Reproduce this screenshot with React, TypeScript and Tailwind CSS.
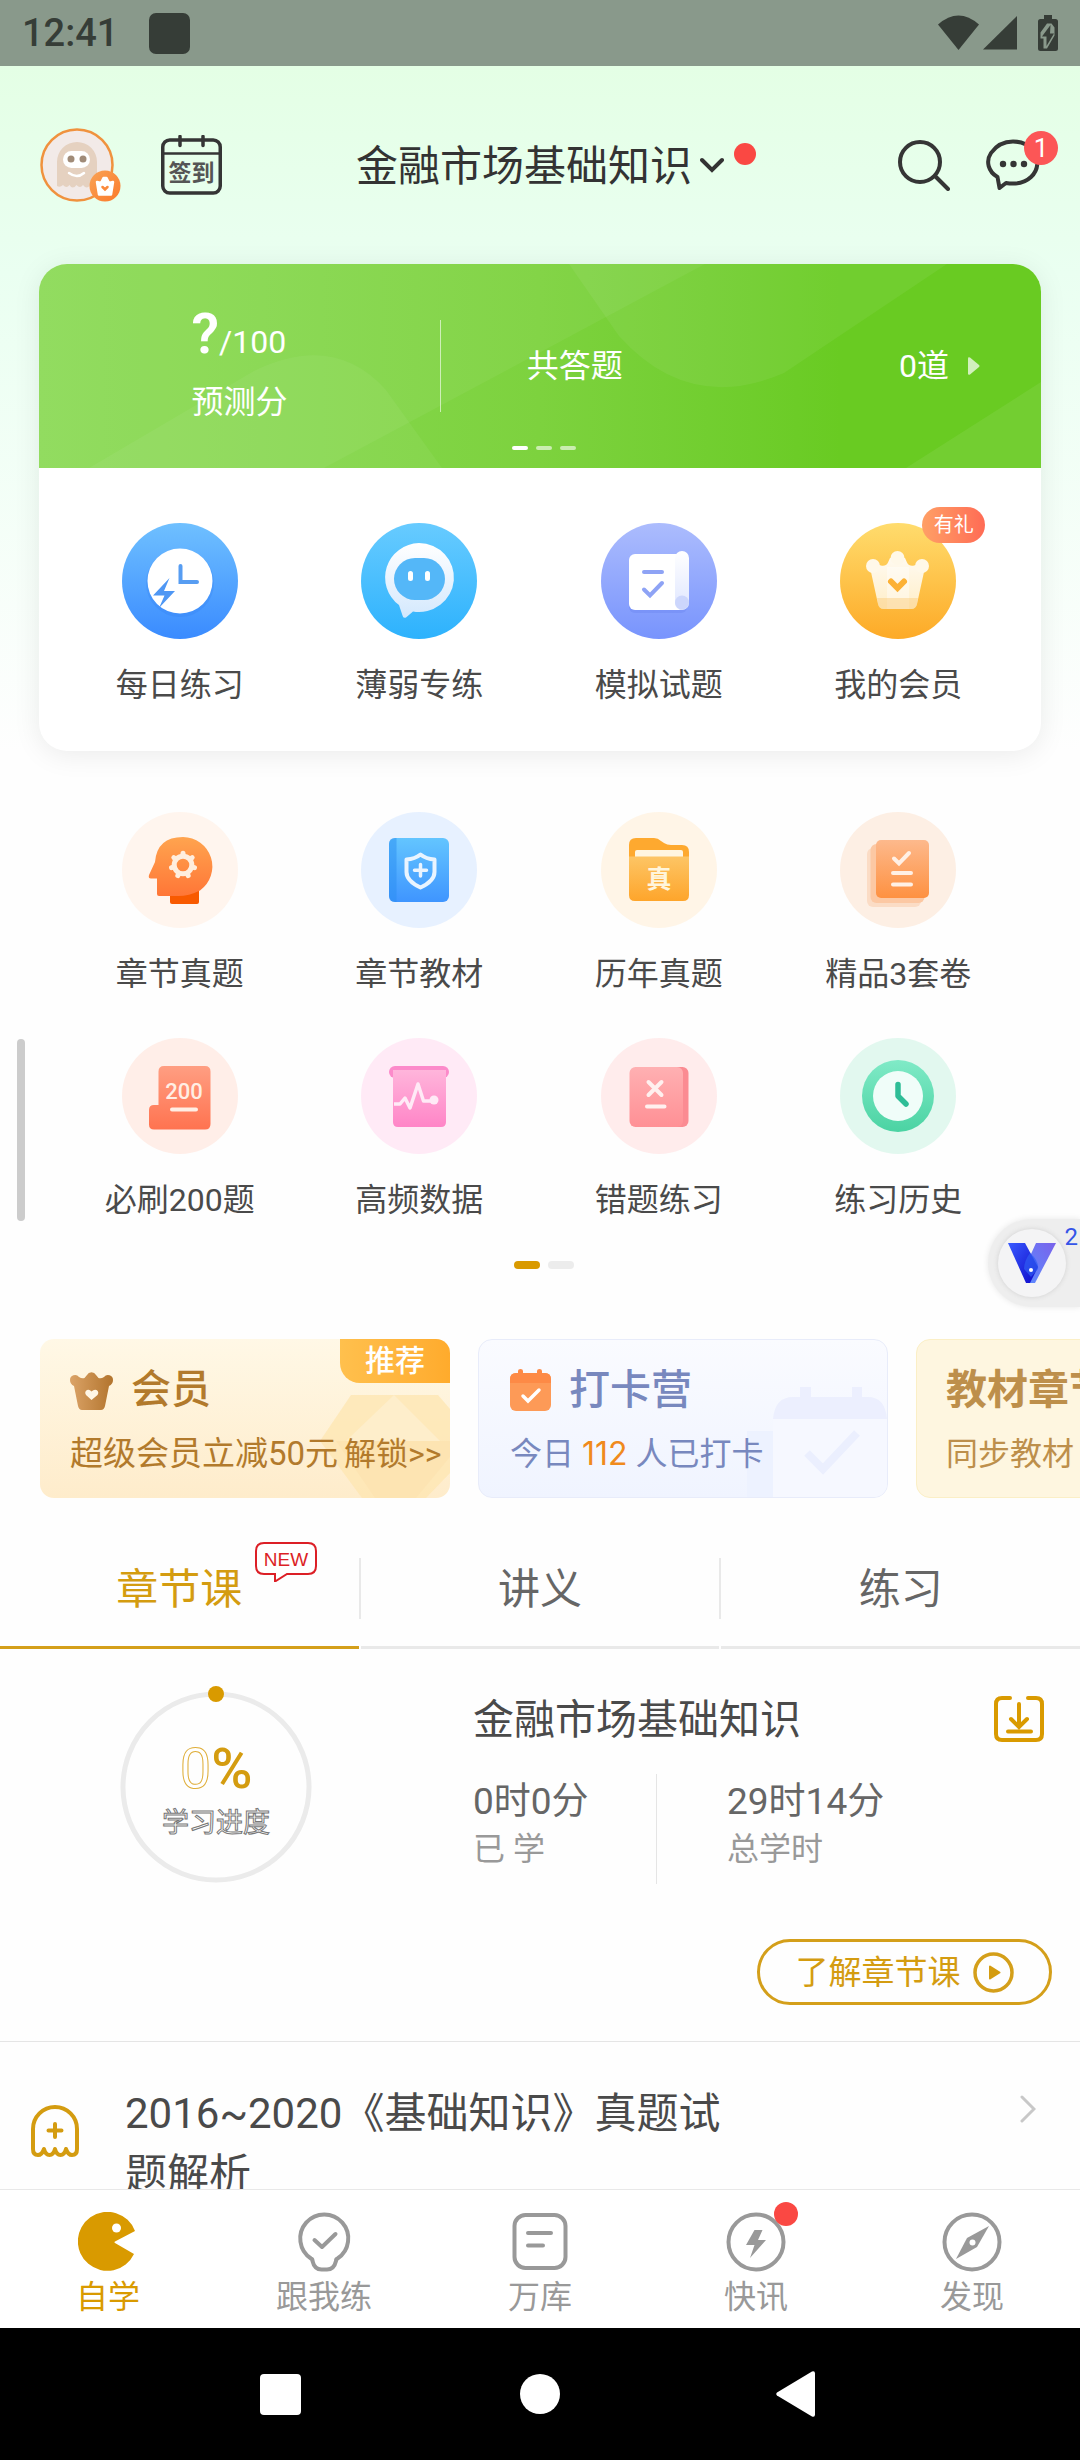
import React, { useState } from "react";

type EntryProps = {
  label: string;
  icon: React.ReactNode;
  badge?: string;
};

/* ---------- Status bar and header icons ---------- */

const StatusBar: React.FC = () => (
  <div className="flex h-[66px] shrink-0 items-center justify-between bg-[#89998b] px-[22px] text-[#363d37]">
    <div className="flex items-center gap-[31px]">
      <span className="text-[38px] font-medium leading-[48px]">12:41</span>
      <span className="h-[41px] w-[41px] rounded-[7px] bg-[#363d37]" />
    </div>
    <svg className="h-9 w-[120px]" viewBox="0 0 120 36" fill="currentColor">
      <path d="M0 9.5Q20.500 -8.500 41 9.500L20.500 35Z" />
      <path d="M79 1V34.500H45Z" />
      <path d="M106 0h8v4h3.500q2.500 0 2.500 2.500v27q0 2.500-2.500 2.500h-15q-2.500 0-2.500-2.500v-27q0-2.500 2.500-2.500H106Z" />
      <path
        d="M109 8.500h4.500l3 4v8l-7.500 13h-3.500v-10h-3v-6Z"
        fill="#89998b"
      />
      <path d="M112.500 10L104 21.500h4.500V31L116 18.500h-4Z" />
    </svg>
  </div>
);

const AvatarIcon = () => (
  <svg className="h-[75px] w-[82px]" viewBox="0 0 82 75">
    <defs>
      <linearGradient id="vip" x1="0" y1="0" x2="1" y2="1">
        <stop offset="0" stopColor="#f9a355" />
        <stop offset="1" stopColor="#fb7a2b" />
      </linearGradient>
    </defs>
    <circle cx="37" cy="37" r="35.500" fill="#f2eae8" stroke="#f0923e" strokeWidth="2.500" />
    <path
      d="M17 34a20 20 0 0 1 40 0V56q-3 5-7 1-3 5-7 0-3 4-6.500 0-4 5-7 0-3 4-6.500 0-3 3-6 1Z"
      fill="#e5d1c0"
    />
    <rect x="23" y="23" width="27" height="17" rx="8.500" fill="#fff" />
    <circle cx="31" cy="31" r="3.500" fill="#a08b78" />
    <circle cx="43" cy="31" r="3.500" fill="#a08b78" />
    <path d="M29 45q8 6 15 0" fill="none" stroke="#fff" strokeWidth="2.500" strokeLinecap="round" />
    <circle cx="65" cy="58" r="15.500" fill="url(#vip)" />
    <path
      d="M57 54l4 1 2.500-5h3l2.500 5 4-1-2 12.500h-12Z"
      fill="#fff"
      stroke="#fff"
      strokeWidth="2.500"
      strokeLinejoin="round"
    />
    <path d="M62.500 59l2.500 2.500 2.500-2.500" fill="none" stroke="#fb8a3b" strokeWidth="2.500" strokeLinecap="round" />
  </svg>
);

const SignInIcon = () => (
  <svg className="h-[60px] w-[61px]" viewBox="0 0 61 60" fill="none" stroke="#353535" strokeWidth="3.500">
    <rect x="1.750" y="5" width="57.500" height="53" rx="7" />
    <path d="M2 18.500h57" strokeWidth="2.500" />
    <path d="M19 1.500v9M42 1.500v9" strokeLinecap="round" />
    <text
      x="30.500"
      y="46"
      fontSize="23"
      fontWeight="700"
      textAnchor="middle"
      fill="#555"
      stroke="none"
    >
      签到
    </text>
  </svg>
);

const SearchIcon = () => (
  <svg className="h-[52px] w-[52px]" viewBox="0 0 52 52" fill="none" stroke="#353535" strokeWidth="4" strokeLinecap="round">
    <circle cx="22" cy="23" r="20" />
    <path d="M37.500 37.500L50 50" />
  </svg>
);

const MessageIcon = () => (
  <svg className="h-[52px] w-[54px]" viewBox="0 0 54 52" fill="none" stroke="#353535" strokeWidth="4">
    <path
      d="M11.500 38A21 18 0 0 1 5 14Q13 2.500 27 2.500q13 0 20.500 9A20 20 0 0 1 45 38Q36 46.500 20 44l-6.500 5Z"
      strokeLinejoin="round"
    />
    <g fill="#353535" stroke="none">
      <circle cx="17" cy="25" r="3.200" />
      <circle cx="27.500" cy="25" r="3.200" />
      <circle cx="38" cy="25" r="3.200" />
    </g>
  </svg>
);

/* ---------- Round entry icons, all drawn on a 116 x 116 board ---------- */

const Board: React.FC<{
  id: string;
  disc: string;
  discEnd?: string;
  from?: string;
  to?: string;
  children: React.ReactNode;
}> = ({ id, disc, discEnd, from, to, children }) => (
  <svg className="h-[116px] w-[116px]" viewBox="0 0 116 116" fill="none">
    <defs>
      <linearGradient id={`${id}-disc`} x1="0" y1="0" x2="0" y2="1">
        <stop offset="0" stopColor={disc} />
        <stop offset="1" stopColor={discEnd || disc} />
      </linearGradient>
      <linearGradient id={id} x1="0" y1="0" x2="0" y2="1">
        <stop offset="0" stopColor={from || "#fff"} />
        <stop offset="1" stopColor={to || "#fff"} />
      </linearGradient>
    </defs>
    <circle cx="58" cy="58" r="58" fill={`url(#${id}-disc)`} />
    {children}
  </svg>
);

const DailyIcon = () => (
  <Board id="daily" disc="#6fc0ff" discEnd="#3a8bff">
    <circle cx="58" cy="60" r="34" fill="#2f7df0" opacity="0.25" />
    <circle cx="58" cy="58" r="32.500" fill="#fff" />
    <path d="M58.500 43v16H75" stroke="#579df2" strokeWidth="4" strokeLinecap="round" />
    <path d="M47.500 55L31 72.500h11.500L37 85l16-17H42Z" fill="#4f97f4" />
  </Board>
);

const RobotIcon = () => (
  <Board id="robot" disc="#67cbff" discEnd="#2db2fd" from="#ffffff" to="#d3e8fd">
    <path
      d="M58 20a35 34.500 0 1 1-6 68.500l-7 6q-3 1-3.500-2L38 82A35 34.500 0 0 1 58 20Z"
      fill="url(#robot)"
    />
    <rect x="33" y="35" width="51" height="42" rx="21" fill="#54b7f8" />
    <path d="M49.500 50.500v5M66.500 50.500v5" stroke="#fff" strokeWidth="5" strokeLinecap="round" />
  </Board>
);

const MockIcon = () => (
  <Board id="mock" disc="#acbcfd" discEnd="#7894fd" from="#ffffff" to="#dfe6ff">
    <rect x="28" y="34" width="58" height="56" rx="6" fill="#5d79ea" opacity="0.25" />
    <rect x="28" y="31" width="56" height="56" rx="6" fill="#fff" />
    <rect x="74" y="28" width="14" height="59" rx="7" fill="url(#mock)" />
    <circle cx="81" cy="79.500" r="7" fill="#ccd6fc" />
    <path d="M43 49h18M43 66.500l6 6L61 60" stroke="#8ea3f5" strokeWidth="4" strokeLinecap="round" />
  </Board>
);

const MemberIcon = () => (
  <Board id="member" disc="#ffdc6d" discEnd="#fdaa27" from="#fffaf0" to="#ffeec8">
    <path
      d="M31 49l7 32q1 5 6 5h27q5 0 6-5l7-32-2-9-8 2.500q-5 1-7-3l-2-4.500H50l-2 4.500q-2 4-7 3L33 40Z"
      fill="url(#member)"
    />
    <g fill="#fff8e8">
      <circle cx="33" cy="43" r="7" />
      <circle cx="57.500" cy="35" r="7" />
      <circle cx="82" cy="43" r="7" />
    </g>
    <path d="M47 44h22v42H47Z" fill="#fff" opacity="0.4" />
    <path d="M37 75h41l-1 6q-1 5-6 5H44q-5 0-6-5Z" fill="#fbc977" opacity="0.45" />
    <path d="M51 58.500l6.500 6.500 6.500-6.500" stroke="#fcb136" strokeWidth="6" strokeLinecap="round" />
  </Board>
);

const HeadIcon = () => (
  <Board id="head" disc="#fff5ee" from="#ffa44f" to="#ff7637">
    <rect x="48" y="76" width="29" height="16" rx="2" fill="#f85a00" />
    <path
      d="M61 25a29.500 29.500 0 0 1 17 53.500Q67 84 56 84H37q-2 0-2-2V66.500h-6q-3 0-2-3.500l6-13Q35 25 61 25Z"
      fill="url(#head)"
    />
    <circle cx="61" cy="53" r="8.800" stroke="#ffeede" strokeWidth="5" />
    {[0, 51, 103, 154, 206, 257, 309].map((deg) => (
      <path
        key={deg}
        d="M61 43v-1.800"
        stroke="#ffeede"
        strokeWidth="5"
        strokeLinecap="round"
        transform={`rotate(${deg} 61 53)`}
      />
    ))}
  </Board>
);

const BookIcon = () => (
  <Board id="book" disc="#e7f1ff" from="#63c5ff" to="#3f95ff">
    <rect x="28" y="26" width="60" height="64" rx="6" fill="url(#book)" />
    <path d="M34 26h1.500v64H34q-6 0-6-6V32q0-6 6-6Z" fill="#2a8df2" opacity="0.5" />
    <path
      d="M59.500 42.500Q65 47 73.500 47.500V60q0 9-14 15.500-14-6.500-14-15.500V47.500Q54 47 59.500 42.500Z"
      stroke="#e9f4ff"
      strokeWidth="4"
      strokeLinejoin="round"
    />
    <path d="M59.500 52.500v11.500M53.500 58.300h12" stroke="#e9f4ff" strokeWidth="3.500" strokeLinecap="round" />
  </Board>
);

const FolderIcon = () => (
  <Board id="folder" disc="#fff5e7" from="#fdc565" to="#fea52b">
    <path d="M28 50V33q0-7 7-7h18q4 0 7 3l3 2q3 2 7 2h11q7 0 7 7v10Z" fill="#fea92f" />
    <rect x="34" y="38" width="48" height="12" rx="2" fill="#fff5e0" />
    <path d="M28 44.500h60V83q0 6-6 6H34q-6 0-6-6Z" fill="url(#folder)" />
    <text x="58" y="76" fontSize="25" fontWeight="700" textAnchor="middle" fill="#fff5dc">
      真
    </text>
  </Board>
);

const PapersIcon = () => (
  <Board id="papers" disc="#fdefe4" from="#fdb98c" to="#fe9141">
    <rect x="27" y="36" width="54" height="59" rx="6" fill="#fbdcc5" />
    <rect x="30.500" y="32" width="54" height="59" rx="6" fill="#fcc8a3" />
    <rect x="36" y="28" width="53" height="58" rx="5" fill="url(#papers)" />
    <path d="M54 46.500l5 5L69 41M53 61h18M53 72.500h18" stroke="#fff0e5" strokeWidth="4" strokeLinecap="round" />
  </Board>
);

const TwoHundredIcon = () => (
  <Board id="two" disc="#ffeee8" from="#ff9e82" to="#ff7350">
    <path
      d="M42 28h41q5.500 0 5.500 5.500V86q0 5.500-5.500 5.500H32q-5 0-5-5V72q0-5 5-5h4.500V33.500Q36.500 28 42 28Z"
      fill="url(#two)"
    />
    <text x="62" y="60.500" fontSize="22" fontWeight="500" textAnchor="middle" fill="#ffeee4">
      200
    </text>
    <path d="M50 71.500h24" stroke="#ffeee4" strokeWidth="4" strokeLinecap="round" />
  </Board>
);

const PulseIcon = () => (
  <Board id="pulse" disc="#ffeaf6" from="#ffb5db" to="#ff85c7">
    <rect x="28" y="28" width="60" height="12" rx="6" fill="#fc8aca" />
    <path d="M32 32h53v52q0 5-5 5H37q-5 0-5-5Z" fill="url(#pulse)" />
    <path d="M33 66h6l5-6 5 10 8-24 5.500 17H72" stroke="#ffeaf6" strokeWidth="3.500" strokeLinejoin="round" />
    <circle cx="73" cy="62" r="4.500" fill="#ffeaf6" />
  </Board>
);

const MistakeIcon = () => (
  <Board id="mistake" disc="#ffecec" from="#ffb0b2" to="#ff9095">
    <rect x="50" y="29" width="37.500" height="60" rx="6" fill="#fb8b92" />
    <rect x="28.500" y="29" width="53.500" height="60" rx="6" fill="url(#mistake)" />
    <path d="M47.500 44l13 13M60.500 44l-13 13M46 68.500h17.500" stroke="#fff0ef" strokeWidth="4" strokeLinecap="round" />
  </Board>
);

const HistoryIcon = () => (
  <Board id="history" disc="#e2f8ef" from="#80eac7" to="#4bd3a3">
    <circle cx="58" cy="58" r="36" fill="url(#history)" />
    <circle cx="58" cy="58" r="25" fill="#f0fdf9" />
    <path d="M58 46.500V58l8 8" stroke="#2fbd97" strokeWidth="5.500" strokeLinecap="round" strokeLinejoin="round" />
  </Board>
);

const topEntries: EntryProps[] = [
  { label: "每日练习", icon: <DailyIcon /> },
  { label: "薄弱专练", icon: <RobotIcon /> },
  { label: "模拟试题", icon: <MockIcon /> },
  { label: "我的会员", icon: <MemberIcon />, badge: "有礼" },
];

const moreEntries: EntryProps[] = [
  { label: "章节真题", icon: <HeadIcon /> },
  { label: "章节教材", icon: <BookIcon /> },
  { label: "历年真题", icon: <FolderIcon /> },
  { label: "精品3套卷", icon: <PapersIcon /> },
  { label: "必刷200题", icon: <TwoHundredIcon /> },
  { label: "高频数据", icon: <PulseIcon /> },
  { label: "错题练习", icon: <MistakeIcon /> },
  { label: "练习历史", icon: <HistoryIcon /> },
];

const Entry: React.FC<EntryProps> = ({ label, icon, badge }) => (
  <button className="flex flex-col items-center">
    <span className="relative">
      {icon}
      {badge && (
        <span className="absolute -top-4 left-[82px] flex h-9 w-[63px] items-center justify-center rounded-full bg-gradient-to-r from-[#ff9f66] to-[#ff6b55] text-[20px] leading-none text-white">
          {badge}
        </span>
      )}
    </span>
    <span className="mt-6 whitespace-nowrap text-[32px] leading-[44px] text-[#4a4a4a]">
      {label}
    </span>
  </button>
);

/* ---------- Sections ---------- */

const Header: React.FC = () => (
  <header className="grid h-[198px] grid-cols-[1fr_auto_1fr] items-center px-10">
    <div className="flex items-center gap-[39px]">
      <button aria-label="个人中心">
        <AvatarIcon />
      </button>
      <button aria-label="签到">
        <SignInIcon />
      </button>
    </div>
    <button className="relative flex items-center gap-2 text-[#333]">
      <span className="pt-[3px] text-[42px] leading-[60px]">金融市场基础知识</span>
      <svg className="h-4 w-6" viewBox="0 0 24 16" fill="none" stroke="currentColor" strokeWidth="4" strokeLinecap="round">
        <path d="M2 3l10 10L22 3" />
      </svg>
      <span className="absolute -right-8 top-[9px] h-[22px] w-[22px] rounded-full bg-[#fa4843]" />
    </button>
    <div className="flex items-center justify-end gap-9">
      <button aria-label="搜索">
        <SearchIcon />
      </button>
      <button className="relative" aria-label="消息">
        <MessageIcon />
        <span className="absolute -right-[18px] -top-2 flex h-[34px] w-[34px] items-center justify-center rounded-full bg-[#fc5656] text-[26px] leading-none text-white">
          1
        </span>
      </button>
    </div>
  </header>
);

const ScoreBanner: React.FC = () => (
  <div className="relative h-[204px] bg-gradient-to-r from-[#8ddb58] via-[#7dd23e] via-50% to-[#69cb22] to-80% text-white">
    <svg className="absolute inset-0 h-full w-full" viewBox="0 0 1002 204" preserveAspectRatio="none" fill="#fff">
      <path d="M0 0H666L285 204H0Z" opacity="0.05" />
      <path d="M50 204L215 107Q295 68 347 126L403 204Z" opacity="0.05" />
      <path d="M530 0L580 72Q650 150 745 109L908 0Z" opacity="0.06" />
      <path d="M867 204L1002 118V204Z" opacity="0.07" />
    </svg>
    <div className="relative flex h-full items-center">
      <div className="w-[40%]">
        <div className="mx-auto w-24 whitespace-nowrap">
          <div className="flex items-baseline text-[32px] leading-[64px]">
            <b className="text-[56px] font-semibold">?</b>
            <span>/100</span>
          </div>
          <div className="text-[32px] leading-[56px]">预测分</div>
        </div>
      </div>
      <div className="h-[92px] w-px bg-white/60" />
      <div className="flex flex-1 items-center pl-[86px] pr-[61px] text-[32px] leading-[44px]">
        <span>共答题</span>
        <span className="ml-auto">0道</span>
        <svg className="ml-[19px] h-[18px] w-3 text-white/70" viewBox="0 0 12 18" fill="currentColor">
          <path d="M0 1.500Q0-.5 2 .5L11 8q1 1 0 2l-9 7.500q-2 1-2-1Z" />
        </svg>
      </div>
    </div>
    <div className="absolute inset-x-0 bottom-[18px] flex justify-center gap-2 pl-2">
      <i className="h-1 w-4 rounded-full bg-white" />
      <i className="h-1 w-4 rounded-full bg-white/60" />
      <i className="h-1 w-4 rounded-full bg-white/60" />
    </div>
  </div>
);

const PromoCards: React.FC = () => (
  <div className="mt-[70px] flex gap-7 overflow-hidden pl-10">
    <a
      href="#member"
      className="relative h-[159px] w-[410px] shrink-0 overflow-hidden rounded-[14px] bg-gradient-to-b from-[#fff8e6] to-[#feeccb] px-[30px] pt-[23px] text-[#b27a2c]"
    >
      <svg className="absolute bottom-0 right-0 h-[103px] w-[130px]" viewBox="0 0 130 103">
        <path d="M0 46L31 0H118L130 14V78L106 103H42Z" fill="#fde6b0" opacity="0.75" />
        <path d="M26 46L74 0l46 46Z" fill="#feeecb" />
        <path d="M16 46H130V62L96 103H55Z" fill="#fde4b2" />
      </svg>
      <span className="absolute right-0 top-0 flex h-11 w-[110px] items-center justify-center rounded-bl-[20px] bg-gradient-to-r from-[#ffc04d] to-[#ffab2c] text-[30px] font-medium leading-none text-white">
        推荐
      </span>
      <div className="relative flex items-center gap-[18px]">
        <svg className="h-10 w-[43px]" viewBox="0 0 43 40">
          <defs>
            <linearGradient id="promo-crown" x1="0" y1="0" x2="1" y2="0">
              <stop offset="0" stopColor="#dba367" />
              <stop offset="1" stopColor="#b2742d" />
            </linearGradient>
          </defs>
          <g fill="url(#promo-crown)">
            <path d="M0 10a5 5 0 0 1 9-3q3 2 5.500 1L17 5a5 5 0 0 1 9 0l2.500 3q2.500 1 5.500-1a5 5 0 0 1 9 3q0 4-4 6l-4 20q-1 4-4 4H12q-3 0-4-4L4 16Q0 14 0 10Z" />
          </g>
          <path
            d="M21.500 30l-5.500-5q-2-3 1-5 2.500-1 4.500 1.500Q24 19 26.500 20q3 2 1 5Z"
            fill="#fff6e5"
          />
        </svg>
        <span className="text-[40px] font-medium leading-[56px]">会员</span>
      </div>
      <div className="relative mt-[14px] flex whitespace-nowrap text-[32px] leading-[44px]">
        <span className="pr-[6px] text-[33px]">超级会员立减50元</span>
        <span>解锁&gt;&gt;</span>
      </div>
    </a>

    <a
      href="#camp"
      className="relative h-[159px] w-[410px] shrink-0 overflow-hidden rounded-[14px] border border-[#e8ecfa] bg-gradient-to-b from-[#fafbff] to-[#f0f4ff] px-[31px] pt-[22px] text-[#7888be]"
    >
      <svg className="absolute bottom-0 right-0 h-[110px] w-[140px]" viewBox="0 0 140 110">
        <path d="M0 44H26V110H0Z" fill="#edf2ff" />
        <path d="M26 32H140V110H26Z" fill="#f6f8ff" />
        <path d="M26 32Q28 10 46 10h7V0h11v10h41V0h10v10h6q17 0 19 22Z" fill="#eceffe" />
        <path d="M60 66l16 16 34-36" fill="none" stroke="#ebeffe" strokeWidth="8" />
      </svg>
      <div className="relative flex items-center gap-[18px]">
        <svg className="h-[42px] w-[41px]" viewBox="0 0 41 42">
          <rect y="4" width="41" height="38" rx="6" fill="#fd9a57" />
          <path d="M0 14v-4q0-6 6-6h2V2q0-2 2.500-2T13 2v2h14V2q0-2 2.500-2T32 2v2h3q6 0 6 6v4Z" fill="#fd8a46" />
          <path d="M13 27l5 5 11-11" fill="none" stroke="#fff" strokeWidth="3.500" strokeLinecap="round" />
        </svg>
        <span className="text-[41px] font-medium leading-[56px]">打卡营</span>
      </div>
      <div className="relative mt-[14px] whitespace-nowrap text-[32px] leading-[44px]">
        今日 <span className="font-[Inter,sans-serif] text-[#f08a1c]">112</span> 人已打卡
      </div>
    </a>

    <a
      href="#textbook"
      className="h-[159px] w-[410px] shrink-0 rounded-[14px] border border-[#fbefc6] bg-[#fef6e0] px-[29px] pt-[22px] text-[#bd8f4b]"
    >
      <div className="text-[41px] font-bold leading-[56px]">教材章节</div>
      <div className="mt-[14px] text-[32px] leading-[44px]">同步教材</div>
    </a>
  </div>
);

const CourseTabs: React.FC = () => {
  const [active, setActive] = useState("章节课");

  return (
    <div className="mt-[30px] grid grid-cols-3 gap-[2px]">
      {["章节课", "讲义", "练习"].map((name, index) => (
        <button
          key={name}
          onClick={() => setActive(name)}
          className={
            active === name
              ? "relative flex h-[121px] items-center justify-center border-b-[3px] border-[#d49f1a] pt-1 text-[42px] text-[#d49c10]"
              : "relative flex h-[121px] items-center justify-center border-b-[3px] border-[#e9e9e9] pt-1 text-[42px] text-[#666]"
          }
        >
          {name}
          {index < 2 && (
            <span className="absolute -right-[2px] top-[30px] h-[61px] w-[2px] bg-[#e9e9e9]" />
          )}
          {index === 0 && (
            <span className="absolute left-[255px] top-[14px]">
              <svg className="h-10 w-[62px]" viewBox="0 0 62 40" fill="#fff" stroke="#dc1f26" strokeWidth="2">
                <path d="M9 1H53q8 0 8 8V24q0 8-8 8H32L20 39.500V32H9q-8 0-8-8V9Q1 1 9 1Z" />
                <text
                  x="31"
                  y="23.500"
                  fontSize="19"
                  fontFamily="Liberation Sans, sans-serif"
                  textAnchor="middle"
                  fill="#dc1f26"
                  stroke="none"
                >
                  NEW
                </text>
              </svg>
            </span>
          )}
        </button>
      ))}
    </div>
  );
};

const CourseProgress: React.FC = () => (
  <section className="flex pb-9">
    <div className="flex w-[40%] justify-center pt-[34px]">
      <div className="relative h-[208px] w-[208px]">
        <svg className="h-full w-full" viewBox="0 0 208 208">
          <circle cx="104" cy="104" r="93" fill="none" stroke="#ebebeb" strokeWidth="5" />
          <circle cx="104" cy="11" r="8" fill="#d99a00" />
        </svg>
        <div className="absolute inset-0 flex flex-col items-center pt-14">
          <div className="text-[56px] leading-[60px] text-[#d49c10]">
            <span className="text-white [-webkit-text-stroke:1px_#dfae3a]">0</span>
            <span className="font-medium">%</span>
          </div>
          <div className="mt-1 text-[27px] leading-[40px] text-white [-webkit-text-stroke:1px_#777]">
            学习进度
          </div>
        </div>
      </div>
    </div>

    <div className="flex flex-1 flex-col pl-[41px] pr-7 pt-10">
      <div className="flex items-center justify-between pr-2">
        <h2 className="pt-[3px] text-[41px] leading-[57px] text-[#4a4a4a]">金融市场基础知识</h2>
        <button aria-label="下载">
          <svg className="h-[46px] w-[50px]" viewBox="0 0 50 46" fill="none" stroke="#d99a00" strokeWidth="4" strokeLinecap="round">
            <path d="M16 2H8Q2 2 2 8V38q0 6 6 6H42q6 0 6-6V8q0-6-6-6H34" />
            <path d="M25 8V31M17 23l8 8 8-8M14 35.500H37" />
          </svg>
        </button>
      </div>
      <div className="mt-[25px] flex h-[110px]">
        <div className="w-[184px] border-r border-[#e5e5e5] pt-1">
          <div className="text-[37px] leading-[48px] text-[#666]">0时0分</div>
          <div className="text-[32px] leading-[46px] text-[#999]">已 学</div>
        </div>
        <div className="pl-[70px] pt-1">
          <div className="text-[37px] leading-[48px] text-[#666]">29时14分</div>
          <div className="text-[32px] leading-[46px] text-[#999]">总学时</div>
        </div>
      </div>
      <button className="mt-[55px] flex h-[66px] w-[295px] items-center justify-center gap-3 self-end rounded-full border-[3px] border-[#d49f1a] text-[33px] leading-none text-[#d49c10]">
        了解章节课
        <svg className="h-[41px] w-[41px]" viewBox="0 0 41 41">
          <circle cx="20.500" cy="20.500" r="18.500" fill="none" stroke="#d49f1a" strokeWidth="3.500" />
          <path d="M17 14.500l9.500 6-9.500 6Z" fill="#d49c10" stroke="#d49c10" strokeWidth="2" strokeLinejoin="round" />
        </svg>
      </button>
    </div>
  </section>
);

const LessonRow: React.FC = () => (
  <a href="#lesson" className="flex items-start border-t border-[#e5e5e5] pl-[31px] pr-[44px] pt-[41px]">
    <svg className="mt-[22px] h-[52px] w-12 shrink-0" viewBox="0 0 48 52" fill="none" stroke="#d49c10" strokeWidth="4" strokeLinecap="round" strokeLinejoin="round">
      <path d="M2 24a22 22 0 0 1 44 0V44q0 6-5 6-4 0-6-6-1.500 6-5.500 6T24 44q-1.500 6-5.500 6T13 44q-2 6-6 6-5 0-5-6Z" />
      <path d="M24 19v13M17.500 25.500h13" />
    </svg>
    <p className="ml-[46px] w-[620px] text-[42px] leading-[61px] text-[#4a4a4a]">
      2016~2020《基础知识》真题试题解析
    </p>
    <svg className="ml-auto mt-3 h-7 w-4" viewBox="0 0 16 28" fill="none" stroke="#c8c8c8" strokeWidth="3" strokeLinecap="round">
      <path d="M2 2l12 12L2 26" />
    </svg>
  </a>
);

/* ---------- Bottom navigation ---------- */

const tabs = [
  {
    name: "自学",
    icon: (
      <>
        <path d="M57 19A29.500 29.500 0 1 0 56 42L37 31q-1-1 0-1.500Z" fill="#d99a00" stroke="none" />
        <circle cx="38.500" cy="16" r="4.500" fill="#fff" stroke="none" />
      </>
    ),
  },
  {
    name: "跟我练",
    icon: (
      <>
        <path d="M18.500 49q0-2-1.500-2.500A24 24 0 1 1 43.500 46.500Q42 47 42 49q-2 8.500-9 8.500h-5.500q-7 0-9-8.500Z" />
        <path d="M20.500 28l7.500 7L41.500 22" />
      </>
    ),
  },
  {
    name: "万库",
    icon: (
      <>
        <rect x="4.500" y="3" width="51" height="53" rx="11" />
        <path d="M18 21H41M18 33.500H33" />
      </>
    ),
  },
  {
    name: "快讯",
    dot: true,
    icon: (
      <>
        <circle cx="30" cy="30" r="27.500" />
        <path d="M28.500 18h8l-4.500 10H40L24 46l4.500-13H20Z" fill="#999" stroke="none" />
      </>
    ),
  },
  {
    name: "发现",
    icon: (
      <>
        <circle cx="30" cy="30" r="27.500" />
        <path d="M47 14L35 35 14 47 25 26Z" fill="#999" stroke="none" />
        <circle cx="30.500" cy="30.500" r="3" fill="#fff" stroke="none" />
      </>
    ),
  },
];

const BottomNav: React.FC = () => {
  const [current, setCurrent] = useState("自学");

  return (
    <nav className="grid h-[139px] shrink-0 grid-cols-5 border-t border-[#e8e8e8] bg-white">
      {tabs.map((tab) => (
        <button
          key={tab.name}
          onClick={() => setCurrent(tab.name)}
          className="flex flex-col items-center pt-[22px]"
        >
          <span className="relative">
            <svg className="h-[60px] w-[60px]" viewBox="0 0 60 60" fill="none" stroke="#999" strokeWidth="4" strokeLinecap="round" strokeLinejoin="round">
              {tab.icon}
            </svg>
            {tab.dot && (
              <span className="absolute -right-3 -top-[10px] h-6 w-6 rounded-full bg-[#fa4843]" />
            )}
          </span>
          <span
            className={
              current === tab.name
                ? "mt-[5px] text-[32px] leading-[40px] text-[#d99a00]"
                : "mt-[5px] text-[32px] leading-[40px] text-[#999]"
            }
          >
            {tab.name}
          </span>
        </button>
      ))}
    </nav>
  );
};

const SystemBar: React.FC = () => (
  <div className="flex h-[132px] shrink-0 justify-center bg-black">
    <div className="grid w-[72%] grid-cols-3 place-items-center">
      <button aria-label="最近任务" className="h-[41px] w-[41px] rounded-[4px] bg-white" />
      <button aria-label="主屏幕" className="h-10 w-10 rounded-full bg-white" />
      <button aria-label="返回">
        <svg className="h-[46px] w-[46px]" viewBox="0 0 46 46" fill="#fff">
          <path d="M1 21.500L36 .5q3-1 3 2v41q0 3-3 2L1 24.500q-1.500-1.500 0-3Z" />
        </svg>
      </button>
    </div>
  </div>
);

/* Floating assistant docked to the right edge */
const FloatingBall: React.FC = () => (
  <button
    aria-label="助手"
    className="absolute right-0 top-[1219px] flex h-[88px] w-[92px] items-center rounded-l-full bg-[#eeeeee] pl-[10px] shadow-[0_0_6px_#e8e8e8]"
  >
    <span className="flex h-[68px] w-[68px] items-center justify-center rounded-full bg-[#f4f4f5] shadow-[0_0_5px_#d0d0d0]">
      <svg className="h-10 w-12" viewBox="0 0 48 40">
        <defs>
          <linearGradient id="v-left" x1="0" y1="0" x2="1" y2="1">
            <stop offset="0" stopColor="#3a5bff" />
            <stop offset="1" stopColor="#0d08c9" />
          </linearGradient>
          <linearGradient id="v-right" x1="0" y1="1" x2="1" y2="0">
            <stop offset="0" stopColor="#5c8bff" />
            <stop offset="1" stopColor="#7a62ea" />
          </linearGradient>
        </defs>
        <path d="M28 0H48L27 40H20L18 22Z" fill="url(#v-right)" />
        <path d="M0 0H17L30 24 22 40H18Z" fill="url(#v-left)" />
        <path d="M22 10q9 8 8 16l-7 8-7-8q0-8 6-16Z" fill="#2f5cf2" opacity="0.7" />
        <circle cx="23" cy="27" r="2" fill="#fff" />
      </svg>
    </span>
    <span className="absolute right-[2px] top-1 text-[24px] leading-[28px] text-[#3555e8]">2</span>
  </button>
);

const App: React.FC = () => {
  return (
    <div className="relative flex h-screen flex-col overflow-hidden bg-[#fefefe] font-[Roboto,'Noto_Sans_CJK_SC',sans-serif]">
      <StatusBar />
      <main className="min-h-0 flex-1 overflow-hidden">
        <div className="bg-gradient-to-b from-[#e4ffe5] via-[#eafff1] via-30% to-[#fefefe]">
          <Header />
          <section className="mx-[39px] overflow-hidden rounded-[28px] bg-white shadow-[0_4px_28px_rgba(0,0,0,0.08)]">
            <ScoreBanner />
            <div className="grid grid-cols-4 pb-11 pl-[21px] pr-[23px] pt-[55px]">
              {topEntries.map((entry) => (
                <Entry key={entry.label} {...entry} />
              ))}
            </div>
          </section>
        </div>

        <section className="mt-[61px] grid grid-cols-4 gap-y-[42px] pl-[60px] pr-[62px]">
          {moreEntries.map((entry) => (
            <Entry key={entry.label} {...entry} />
          ))}
        </section>
        <div className="mt-[39px] flex justify-center gap-2 pl-2">
          <i className="h-2 w-[26px] rounded-full bg-[#d99a00]" />
          <i className="h-2 w-[26px] rounded-full bg-[#ececec]" />
        </div>

        <PromoCards />
        <CourseTabs />
        <CourseProgress />
        <LessonRow />
      </main>
      <BottomNav />
      <SystemBar />

      {/* Scroll handle on the left edge */}
      <span className="absolute left-[17px] top-[1039px] h-[182px] w-2 rounded-full bg-[#ccc]" />
      <FloatingBall />
    </div>
  );
};

export default App;
